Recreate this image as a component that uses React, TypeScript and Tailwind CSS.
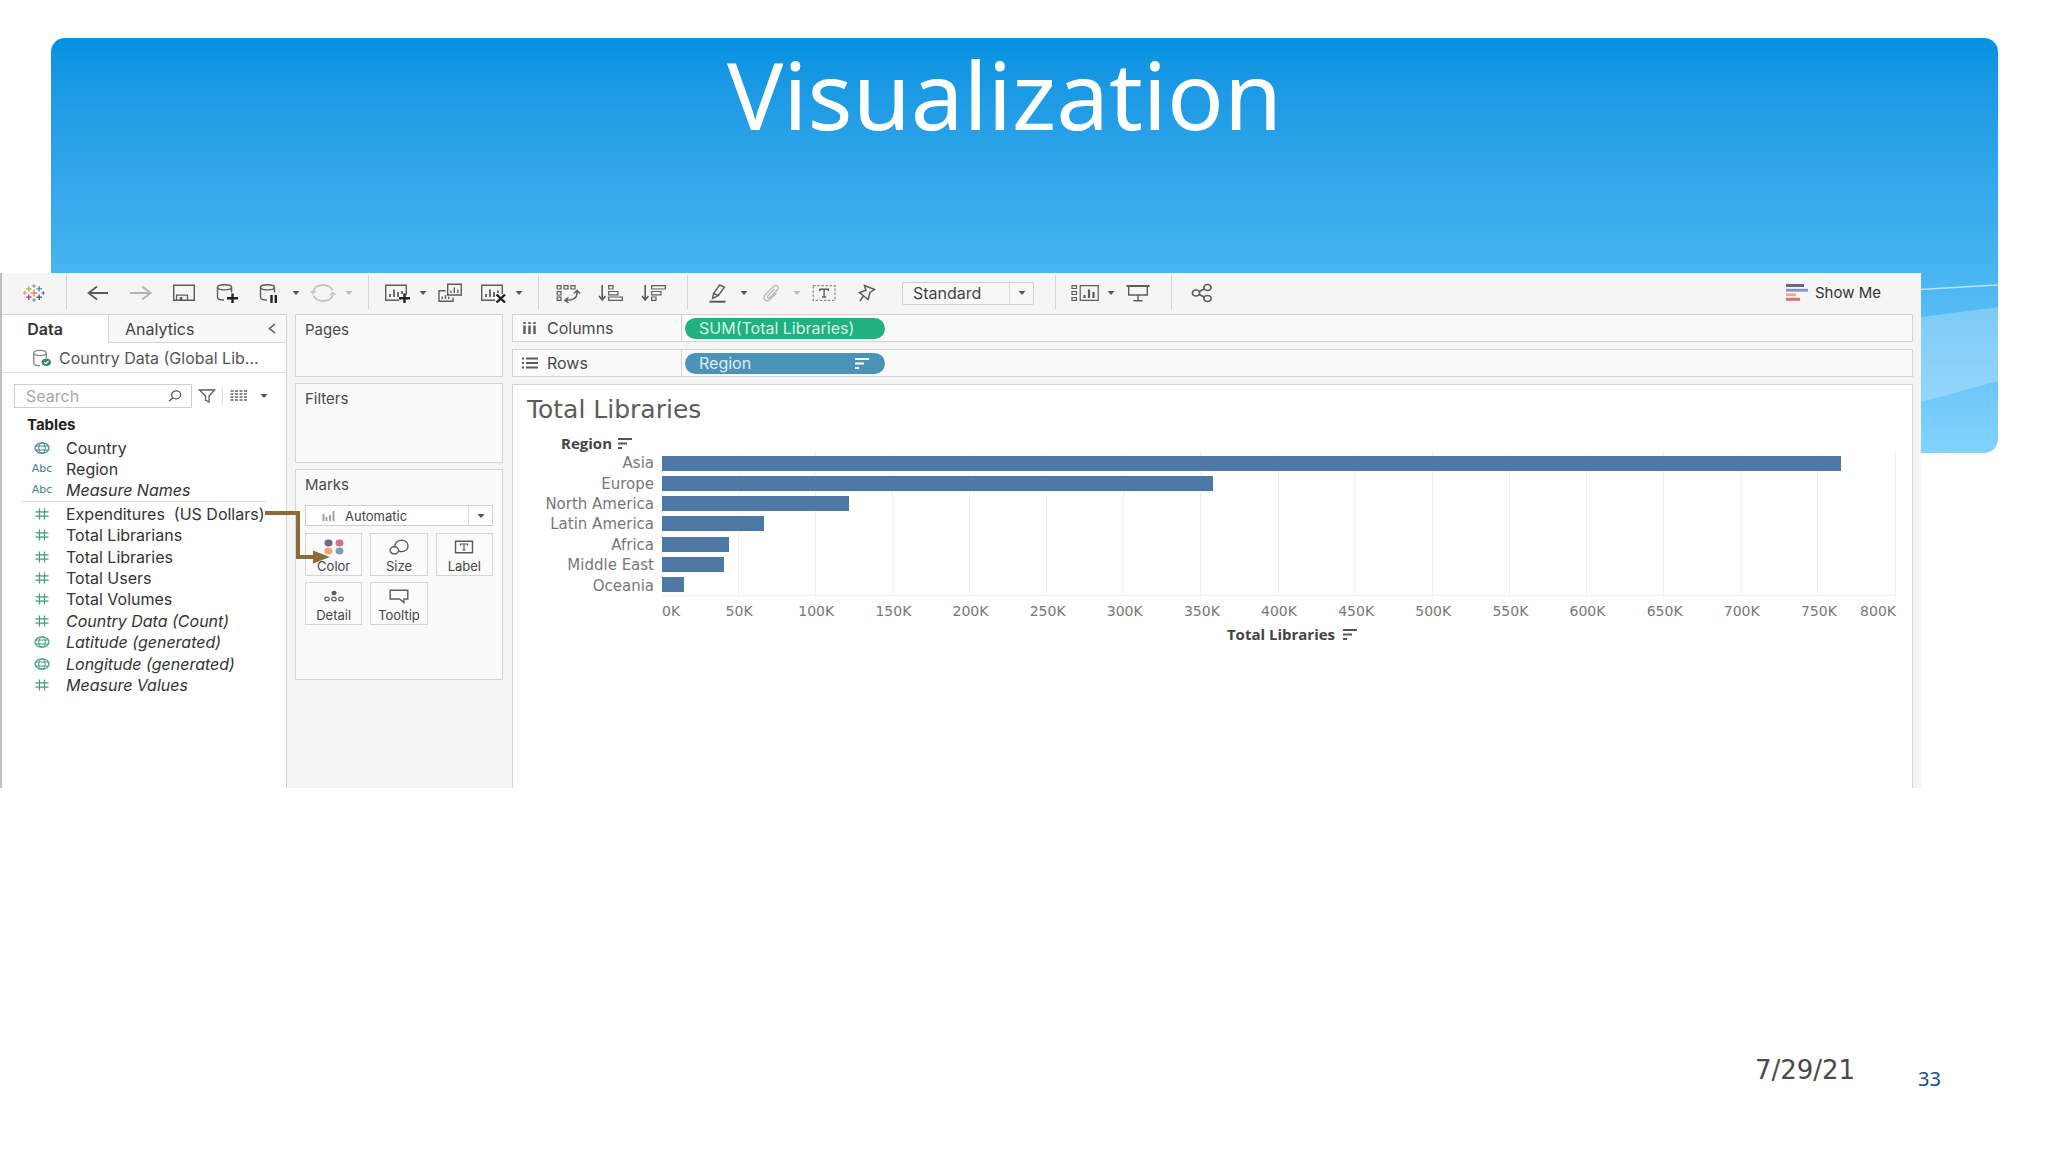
import React from 'react';

const INK = '#5c5c5c';

interface IconProps {
    children: React.ReactNode;
    width?: number;
    height?: number;
    color?: string;
}

function Icon({ children, width = 26, height = 20, color = INK }: IconProps) {
    return (
        <svg
            width={width}
            height={height}
            viewBox={`0 0 ${width} ${height}`}
            fill="none"
            stroke={color}
            strokeWidth="1.4"
            className="shrink-0"
            aria-hidden="true"
        >
            {children}
        </svg>
    );
}

function Caret({ color = '#555' }: { color?: string }) {
    return (
        <svg width="8" height="4" viewBox="0 0 8 4" className="shrink-0" aria-hidden="true">
            <path d="M0.5 0H7.5L4 4Z" fill={color} />
        </svg>
    );
}

function ToolButton({ label, children }: { label: string; children: React.ReactNode }) {
    return (
        <button type="button" aria-label={label} className="flex h-full w-[43px] items-center justify-center">
            {children}
        </button>
    );
}

function CaretButton({ label, color }: { label: string; color?: string }) {
    return (
        <button type="button" aria-label={label} className="flex h-full w-[10px] items-center justify-center">
            <Caret color={color} />
        </button>
    );
}

function ToolGroup({ className, children }: { className: string; children: React.ReactNode }) {
    return <div className={`flex h-[35px] items-center border-[#d6d6d6] ${className}`}>{children}</div>;
}

function SortGlyph({ color = '#555' }: { color?: string }) {
    return (
        <svg width="14" height="11" viewBox="0 0 14 11" className="shrink-0" aria-hidden="true">
            <path d="M0 1H14M0 5.5H9M0 10H4" stroke={color} strokeWidth="1.8" />
        </svg>
    );
}

// [x, y, arm, colour, stroke width]
const logoMarks: [number, number, number, string, number][] = [
    [13, 10, 3.4, '#e0924a', 1.4],
    [7.8, 5.8, 2.8, '#cfa63f', 1.3],
    [18.2, 5.8, 2.8, '#5b879b', 1.3],
    [7.8, 14.2, 2.8, '#b0445c', 1.3],
    [18.2, 14.2, 2.8, '#45596e', 1.3],
    [13, 3, 1.8, '#7199a6', 1.2],
    [13, 17, 1.8, '#7f8f96', 1.2],
    [3.8, 10, 1.8, '#d08f80', 1.2],
    [22.2, 10, 1.8, '#6b6f86', 1.2],
];

function Logo() {
    return (
        <Icon>
            {logoMarks.map(([x, y, r, color, w], index) => (
                <path key={index} d={`M${x - r} ${y}H${x + r}M${x} ${y - r}V${y + r}`} stroke={color} strokeWidth={w} />
            ))}
        </Icon>
    );
}

function Toolbar() {
    return (
        <div className="flex h-[41px] items-center bg-[#f5f5f5] pb-[2px]">
            <div className="flex w-[64px] justify-center">
                <Logo />
            </div>
            <ToolGroup className="border-l pr-[14px] pl-[9px]">
                <ToolButton label="Undo">
                    <Icon>
                        <path d="M23 10H3M12 3.5L3.5 10L12 16.5" strokeWidth="1.8" />
                    </Icon>
                </ToolButton>
                <ToolButton label="Redo">
                    <Icon color="#b3b3b3">
                        <path d="M2 10H23M14 3.5L22.8 10L14 16.5" strokeWidth="1.8" />
                    </Icon>
                </ToolButton>
                <ToolButton label="Save">
                    <Icon>
                        <path d="M2.7 2.2H23.3V17.3H2.7Z" />
                        <path d="M5.5 17V12.2H16.5V17" strokeWidth="1.2" />
                        <path d="M10 17V14" strokeWidth="2.6" />
                    </Icon>
                </ToolButton>
                <ToolButton label="New data source">
                    <Icon>
                        <ellipse cx="10.5" cy="4.3" rx="7" ry="2.6" />
                        <path d="M3.5 4.3V14.2C3.5 15.8 6.5 17 10 17M17.5 4.3V9.5" />
                        <path d="M18.5 10.5V20M13 15.3H24" stroke="#222" strokeWidth="2.4" />
                    </Icon>
                </ToolButton>
                <ToolButton label="Pause updates">
                    <Icon>
                        <ellipse cx="10.5" cy="4.3" rx="7" ry="2.6" />
                        <path d="M3.5 4.3V14.2C3.5 15.8 6.5 17 10 17M17.5 4.3V9.5" />
                        <path d="M14.5 12V20M18.8 12V20" stroke="#222" strokeWidth="2.4" />
                    </Icon>
                </ToolButton>
                <CaretButton label="Update options" />
                <ToolButton label="Run update">
                    <Icon color="#c4c4c4">
                        <path d="M3 9C4 4.5 8 2 13 2C17.5 2 21 4 22.5 7.5M23 11C22 15.5 18 18 13 18C8.5 18 5 16 3.5 12.5" strokeWidth="1.8" />
                        <path d="M0.5 8L3 10.5L6 8M20 12L23 9.5L25.5 12" strokeWidth="1.4" />
                    </Icon>
                </ToolButton>
                <CaretButton label="Run options" color="#b8b8b8" />
            </ToolGroup>
            <ToolGroup className="border-l pr-[14px] pl-[6px]">
                <ToolButton label="New worksheet">
                    <Icon>
                        <path d="M15 17.3H1.7V2.2H22.3V12" />
                        <path d="M6 14V11M10 14V6.5M14 14V9M18 11V8" strokeWidth="1.8" />
                        <path d="M20.5 10.5V20M15 15.3H26" stroke="#222" strokeWidth="2.4" />
                    </Icon>
                </ToolButton>
                <CaretButton label="Worksheet options" />
                <ToolButton label="Duplicate">
                    <Icon>
                        <path d="M10.7 1.2H24.3V12H10.7Z" />
                        <path d="M14 10V7.5M17.3 10V4.5M20.8 10V6.5" strokeWidth="1.4" />
                        <path d="M8.5 7.7H2V18.3H16V14.5" />
                        <path d="M5.3 16V13.5M8.5 16V12M11.7 16V13.8" strokeWidth="1.4" />
                    </Icon>
                </ToolButton>
                <ToolButton label="Clear sheet">
                    <Icon>
                        <path d="M15 17.3H1.7V2.2H22.3V11" />
                        <path d="M6 14V11M10 14V6.5M14 14V9M18 10V7.5" strokeWidth="1.8" />
                        <path d="M16.5 11.5L25 19.5M25 11.5L16.5 19.5" stroke="#222" strokeWidth="2.4" />
                    </Icon>
                </ToolButton>
                <CaretButton label="Clear options" />
            </ToolGroup>
            <ToolGroup className="border-l pr-[12px] pl-[7px]">
                <ToolButton label="Swap rows and columns">
                    <Icon>
                        <path d="M2.2 2.7H6V6H2.2ZM9 2.7H13V6H9ZM16 2.7H20V6H16ZM2.2 8.7H6V12H2.2ZM2.2 14.2H6V17.3H2.2Z" strokeWidth="1.2" />
                        <path d="M22 8V10.5C22 15 17.5 17.3 11 17.3M18.8 10.5L22 7.5L25.2 10.5M13.5 14.5L10 17.3L13.5 20" strokeWidth="1.5" />
                    </Icon>
                </ToolButton>
                <ToolButton label="Sort ascending">
                    <Icon>
                        <path d="M4.2 2V16M1 13L4.2 17L7.4 13" strokeWidth="1.6" />
                        <path d="M10.7 2.7H15V6H10.7ZM10.7 8.5H20V11.8H10.7ZM10.7 14H24.3V17.3H10.7Z" strokeWidth="1.2" />
                    </Icon>
                </ToolButton>
                <ToolButton label="Sort descending">
                    <Icon>
                        <path d="M4.2 2V16M1 13L4.2 17L7.4 13" strokeWidth="1.6" />
                        <path d="M10.7 2.7H24.3V6H10.7ZM10.7 8.5H20V11.8H10.7ZM10.7 14H15V17.3H10.7Z" strokeWidth="1.2" />
                    </Icon>
                </ToolButton>
            </ToolGroup>
            <ToolGroup className="border-l pr-[21px] pl-[8px]">
                <ToolButton label="Highlight">
                    <Icon>
                        <path d="M14.5 2L19.5 4L13.5 12.5L7.5 15.5L8.5 10.5ZM8.5 10.5L13.5 12.5" />
                        <path d="M4.5 18.7H20.5" strokeWidth="2" />
                    </Icon>
                </ToolButton>
                <CaretButton label="Highlight options" />
                <ToolButton label="Group members">
                    <Icon color="#bdbdbd">
                        <path d="M16.5 6L10 12.8C8.6 14.3 10.4 16 12 14.5L19.3 7C22 4 18.2 0.8 15.2 3.8L7.3 11.8C3.6 15.8 8.4 20 12.2 16.3L18.5 10" strokeWidth="1.5" />
                    </Icon>
                </ToolButton>
                <CaretButton label="Group options" color="#b8b8b8" />
                <ToolButton label="Show mark labels">
                    <Icon>
                        <path d="M2.2 2.7H24V17.3H2.2Z" strokeDasharray="2.5 1.6" stroke="#8a8a8a" strokeWidth="1.2" />
                        <path d="M8.8 8V6.2H17.4V8M13.1 6.2V14M11 14H15.2" />
                    </Icon>
                </ToolButton>
                <ToolButton label="Pin">
                    <Icon>
                        <path d="M10.5 2.5L20.5 6.5L16 9.5L14.2 16.5L5.5 9.5L12 7.2ZM9.5 12.8L6 18" strokeWidth="1.5" />
                    </Icon>
                </ToolButton>
                <div className="relative ml-[14px] h-[23px] w-[132px]">
                    <select
                        aria-label="Fit"
                        className="h-full w-full appearance-none rounded-xs border border-[#cfcfcf] bg-[#f8f8f8] pl-[10px] text-[16px] leading-[20px] text-[#444]"
                    >
                        <option>Standard</option>
                    </select>
                    <span className="pointer-events-none absolute inset-y-0 right-0 flex w-[25px] items-center justify-center border-l border-[#dcdcdc]">
                        <Caret />
                    </span>
                </div>
            </ToolGroup>
            <ToolGroup className="border-l pr-[12px] pl-[7px]">
                <ToolButton label="Show cards">
                    <Icon width={28}>
                        <path d="M1 2.7H5.5V5.5H1ZM1 8.5H5.5V11.5H1ZM1 14.5H5.5V17.3H1ZM9.2 2.7H27.2V17.3H9.2Z" strokeWidth="1.2" />
                        <path d="M13.5 15V12M18 15V6.5M22.5 15V9" strokeWidth="2.2" />
                    </Icon>
                </ToolButton>
                <CaretButton label="Card options" />
                <ToolButton label="Presentation mode">
                    <Icon>
                        <path d="M1.5 3H24.5" strokeWidth="2" />
                        <path d="M3.7 3V12H22.3V3M13 12V17.3M8.5 17.8H17.5" />
                    </Icon>
                </ToolButton>
            </ToolGroup>
            <ToolGroup className="border-l pl-[8px]">
                <ToolButton label="Share">
                    <Icon>
                        <ellipse cx="7" cy="10" rx="3.6" ry="3" strokeWidth="1.7" />
                        <ellipse cx="18.5" cy="4.5" rx="3.6" ry="3" strokeWidth="1.7" />
                        <ellipse cx="18.5" cy="15.5" rx="3.6" ry="3" strokeWidth="1.7" />
                        <path d="M10 8.5L15.3 6M10 11.5L15.3 14" strokeWidth="1.7" />
                    </Icon>
                </ToolButton>
            </ToolGroup>
            <button type="button" className="mr-[40px] ml-auto flex items-center gap-[7px] text-[15px] leading-[20px] text-[#333]">
                <svg width="22" height="17" viewBox="0 0 22 17" aria-hidden="true">
                    <path d="M0 1.5H18" stroke="#6a6685" strokeWidth="3" />
                    <path d="M0 6.2H22" stroke="#7f93c4" strokeWidth="2.8" />
                    <path d="M0 10.8H10" stroke="#eeab8c" strokeWidth="2.8" />
                    <path d="M0 15.3H14" stroke="#dc6f73" strokeWidth="3" />
                </svg>
                Show Me
            </button>
        </div>
    );
}

type FieldKind = 'geo' | 'text' | 'number';

interface Field {
    name: string;
    kind: FieldKind;
    italic?: boolean;
    color: string;
}

const BLUE = '#3f8385';
const GREEN = '#3f9c7c';

const dimensions: Field[] = [
    { name: 'Country', kind: 'geo', color: BLUE },
    { name: 'Region', kind: 'text', color: BLUE },
    { name: 'Measure Names', kind: 'text', color: BLUE, italic: true },
];

const measures: Field[] = [
    { name: 'Expenditures  (US Dollars)', kind: 'number', color: GREEN },
    { name: 'Total Librarians', kind: 'number', color: GREEN },
    { name: 'Total Libraries', kind: 'number', color: GREEN },
    { name: 'Total Users', kind: 'number', color: GREEN },
    { name: 'Total Volumes', kind: 'number', color: GREEN },
    { name: 'Country Data (Count)', kind: 'number', color: GREEN, italic: true },
    { name: 'Latitude (generated)', kind: 'geo', color: GREEN, italic: true },
    { name: 'Longitude (generated)', kind: 'geo', color: GREEN, italic: true },
    { name: 'Measure Values', kind: 'number', color: GREEN, italic: true },
];

function FieldIcon({ kind, color }: { kind: FieldKind; color: string }) {
    if (kind === 'text') {
        return <span className="font-['DejaVu_Sans',sans-serif] text-[11px] leading-[14px] text-[#3f8385]">Abc</span>;
    }
    return (
        <Icon width={16} height={12} color={color}>
            {kind === 'geo' ? (
                <>
                    <ellipse cx="8" cy="6" rx="7" ry="5.2" strokeWidth="1.2" />
                    <ellipse cx="8" cy="6" rx="3.2" ry="5.2" strokeWidth="1" />
                    <path d="M1.8 4H14.2M1.8 8H14.2" strokeWidth="1" />
                </>
            ) : (
                <path d="M5.5 0.5V11.5M10.5 0.5V11.5M1.5 3.8H14.5M1.5 8.2H14.5" strokeWidth="1.2" />
            )}
        </Icon>
    );
}

function FieldList({ fields }: { fields: Field[] }) {
    return (
        <>
            {fields.map((field) => (
                <li key={field.name} className="flex flex-1 items-center">
                    <span className="flex w-[42px] justify-center">
                        <FieldIcon kind={field.kind} color={field.color} />
                    </span>
                    <span className={`pl-[3px] whitespace-pre ${field.italic ? 'italic' : ''}`}>{field.name}</span>
                </li>
            ))}
        </>
    );
}

function DataPane() {
    return (
        <aside className="w-[285px] shrink-0 border-t border-r border-[#d4d4d4] bg-white text-[16px] leading-[20px] text-[#333]">
            <div className="flex h-[28px]">
                <button type="button" className="w-[106px] pr-[20px] text-center font-semibold text-[#333]">
                    Data
                </button>
                <div className="flex flex-1 items-center justify-between border-b border-l border-[#d4d4d4] bg-[#f8f8f8] pr-[10px] pl-[16px]">
                    <button type="button" className="text-[#444]">
                        Analytics
                    </button>
                    <button type="button" aria-label="Collapse pane">
                        <svg width="8" height="11" viewBox="0 0 8 11" fill="none" stroke={INK} strokeWidth="1.6" aria-hidden="true">
                            <path d="M7 1L1.5 5.5L7 10" />
                        </svg>
                    </button>
                </div>
            </div>
            <a href="#source" className="flex h-[30px] items-center gap-[7px] border-b border-[#dcdcdc] pl-[30px] text-[#555]">
                <Icon width={20} height={18}>
                    <ellipse cx="8" cy="4" rx="6.3" ry="2.6" stroke="#8a8a8a" />
                    <path d="M1.7 4V14C1.7 15.6 4.5 16.8 8 16.8M14.3 4V9" stroke="#8a8a8a" />
                    <ellipse cx="14.3" cy="13.3" rx="4.7" ry="3.8" fill="#3a8070" stroke="none" />
                    <path d="M12.2 13.2L13.8 14.7L16.6 12" stroke="#fff" strokeWidth="1.2" />
                </Icon>
                Country Data (Global Lib...
            </a>
            <div className="mt-[11px] flex items-center pl-[12px]">
                <div className="flex h-[24px] w-[178px] items-center border border-[#cfcfcf] pr-[9px] pl-[11px]">
                    <input
                        type="text"
                        aria-label="Search"
                        placeholder="Search"
                        className="min-w-0 flex-1 outline-none placeholder:text-[#a8a8a8]"
                    />
                    <Icon width={14} height={12}>
                        <ellipse cx="8.2" cy="4.8" rx="4.6" ry="4" strokeWidth="1.3" />
                        <path d="M5 7.8L1 11.3" strokeWidth="1.5" />
                    </Icon>
                </div>
                <button type="button" aria-label="Filter fields" className="ml-[6px]">
                    <Icon width={18} height={14}>
                        <path d="M1.5 1H16.5L11 7V13L7.5 11V7Z" strokeWidth="1.3" />
                    </Icon>
                </button>
                <button type="button" aria-label="View as" className="ml-[6px] flex h-[18px] items-center gap-[13px] border-l border-[#dcdcdc] pl-[7px]">
                    <Icon width={17} height={12} color="#8a8a8a">
                        <path d="M2 0V12M6.5 0V12M11 0V12M15.5 0V12" strokeWidth="3" strokeDasharray="2 1" />
                    </Icon>
                    <Caret />
                </button>
            </div>
            <h2 className="mt-[7px] pl-[25px] text-[15px] leading-[20px] font-bold text-[#222]">Tables</h2>
            <ul className="mx-[19px] mt-[2px] flex h-[65px] flex-col border-b border-[#dcdcdc]">
                <FieldList fields={dimensions} />
            </ul>
            <ul className="mx-[19px] mt-px flex h-[193px] flex-col">
                <FieldList fields={measures} />
            </ul>
        </aside>
    );
}

function MarkButton({ label, children }: { label: string; children: React.ReactNode }) {
    return (
        <button
            type="button"
            className="flex h-[43px] flex-col items-center justify-between border border-[#d4d4d4] bg-[#fbfbfb] pt-[4px] pb-px text-[13px] leading-[16px] text-[#444]"
        >
            {children}
            {label}
        </button>
    );
}

function Card({ title, className, children }: { title: string; className: string; children?: React.ReactNode }) {
    return (
        <section className={`border border-[#d4d4d4] bg-[#fafafa] px-[9px] pt-[5px] ${className}`}>
            <h2 className="text-[15px] leading-[20px] text-[#4a4a4a]">{title}</h2>
            {children}
        </section>
    );
}

function CardColumn() {
    return (
        <div className="mr-[9px] ml-[8px] flex w-[208px] shrink-0 flex-col gap-[6px]">
            <Card title="Pages" className="h-[63px]" />
            <Card title="Filters" className="h-[80px]" />
            <Card title="Marks" className="h-[211px]">
                <div className="relative mt-[10px] h-[21px]">
                    <select
                        aria-label="Mark type"
                        className="block h-full w-full appearance-none border border-[#cfcfcf] bg-white pl-[39px] text-[13px] leading-[16px] text-[#444]"
                    >
                        <option>Automatic</option>
                    </select>
                    <span className="pointer-events-none absolute inset-y-0 left-[17px] flex items-center">
                        <Icon width={13} height={10} color="#999">
                            <path d="M1.5 3V10M4.5 6V10M8 4V10M11.5 0V10" strokeWidth="1.8" />
                        </Icon>
                    </span>
                    <span className="pointer-events-none absolute inset-y-0 right-0 flex w-[25px] items-center justify-center border-l border-[#dcdcdc]">
                        <Caret />
                    </span>
                </div>
                <div className="mt-[7px] grid grid-cols-3 gap-x-[8px] gap-y-[6px]">
                    <MarkButton label="Color">
                        <Icon width={20} height={18}>
                            <g stroke="none">
                                <ellipse cx="4.5" cy="5" rx="4" ry="3.4" fill="#6f6880" />
                                <ellipse cx="15.5" cy="5" rx="4" ry="3.4" fill="#cf7391" />
                                <ellipse cx="4.5" cy="13" rx="4" ry="3.4" fill="#efa471" />
                                <ellipse cx="15.5" cy="13" rx="4" ry="3.4" fill="#7c9fb9" />
                            </g>
                        </Icon>
                    </MarkButton>
                    <MarkButton label="Size">
                        <Icon width={20} height={18}>
                            <path d="M6 8.5C6 4.5 8.8 2.2 12.5 2.2C16.3 2.2 19 4.6 19 8C19 11.4 16.3 13.6 12.5 13.6C11.3 13.6 10.5 13.4 9.6 13" />
                            <ellipse cx="5.3" cy="12.3" rx="4.2" ry="3.6" />
                        </Icon>
                    </MarkButton>
                    <MarkButton label="Label">
                        <Icon width={20} height={18}>
                            <path d="M1.5 3.2H18.5V14.8H1.5Z" />
                            <path d="M6.5 7.5V6H13.5V7.5M10 6V12M8.3 12H11.7" strokeWidth="1.2" />
                        </Icon>
                    </MarkButton>
                    <MarkButton label="Detail">
                        <Icon width={20} height={18}>
                            <ellipse cx="10" cy="6" rx="2.6" ry="2.2" fill={INK} stroke="none" />
                            <ellipse cx="3" cy="12" rx="2.2" ry="1.9" strokeWidth="1.2" />
                            <ellipse cx="10" cy="12" rx="2.2" ry="1.9" strokeWidth="1.2" />
                            <ellipse cx="17" cy="12" rx="2.2" ry="1.9" strokeWidth="1.2" />
                        </Icon>
                    </MarkButton>
                    <MarkButton label="Tooltip">
                        <Icon width={20} height={18}>
                            <path d="M1.2 3.2H18.8V12H15V15.5L10.5 12H1.2Z" />
                        </Icon>
                    </MarkButton>
                </div>
            </Card>
        </div>
    );
}

function Shelf({ label, icon, children }: { label: string; icon: React.ReactNode; children: React.ReactNode }) {
    return (
        <div className="flex h-[28px] items-center border border-[#d4d4d4] bg-[#fafafa] text-[16px] leading-[20px] text-[#4a4a4a]">
            <div className="flex h-full w-[169px] items-center gap-[9px] border-r border-[#d4d4d4] pl-[9px]">
                {icon}
                {label}
            </div>
            {children}
        </div>
    );
}

const regions = [
    { name: 'Asia', total: 764.4 },
    { name: 'Europe', total: 357 },
    { name: 'North America', total: 121.3 },
    { name: 'Latin America', total: 66 },
    { name: 'Africa', total: 43.2 },
    { name: 'Middle East', total: 40.4 },
    { name: 'Oceania', total: 14 },
];

const AXIS_MAX = 800;
const ticks = Array.from({ length: 15 }, (_, i) => (i + 1) * 50);

function Chart() {
    return (
        <figure className="font-['DejaVu_Sans','Verdana',sans-serif] text-[15px] leading-[18px] text-[#777]">
            <div className="mb-px flex w-[149px] items-center justify-end gap-[6px] pr-[30px] font-['Open_Sans',sans-serif] font-bold text-[#444]">
                Region
                <SortGlyph />
            </div>
            <div className="flex h-[143px]">
                <ul className="flex w-[149px] shrink-0 flex-col pr-[8px] text-right">
                    {regions.map((region) => (
                        <li key={region.name} className="flex flex-1 items-center justify-end">
                            {region.name}
                        </li>
                    ))}
                </ul>
                <div className="grid flex-1 border-b border-[#f0f0f0]">
                    <div className="col-start-1 row-start-1 grid grid-cols-16 divide-x divide-[#f0f0f0] border-r border-[#f0f0f0]">
                        {Array.from({ length: 16 }, (_, i) => (
                            <div key={i} />
                        ))}
                    </div>
                    <div className="col-start-1 row-start-1 flex flex-col">
                        {regions.map((region) => (
                            <div key={region.name} className="flex flex-1 items-center">
                                <div className="h-[15px] bg-[#4e79a7]" style={{ width: `${(region.total / AXIS_MAX) * 100}%` }} />
                            </div>
                        ))}
                    </div>
                </div>
            </div>
            <div className="mt-[6px] ml-[149px] flex text-center text-[14px] leading-[18px]">
                <span className="min-w-0 flex-1 text-left">0K</span>
                {ticks.map((tick) => (
                    <span key={tick} className="min-w-0 flex-2">
                        {tick}K
                    </span>
                ))}
                <span className="flex min-w-0 flex-1 justify-end">800K</span>
            </div>
            <figcaption className="mt-[5px] ml-[149px] flex items-center justify-center gap-[8px] pl-[26px] font-['Open_Sans',sans-serif] font-bold text-[#444]">
                Total Libraries
                <SortGlyph />
            </figcaption>
        </figure>
    );
}

function Worksheet() {
    return (
        <main className="mr-[8px] flex min-w-0 flex-1 flex-col gap-[7px]">
            <Shelf
                label="Columns"
                icon={
                    <svg width="16" height="12" viewBox="0 0 16 12" aria-hidden="true">
                        <path d="M2.5 0V2M7.5 0V2M12.5 0V2M2.5 3.5V12M7.5 3.5V12M12.5 3.5V12" stroke={INK} strokeWidth="2.4" />
                    </svg>
                }
            >
                <button type="button" className="ml-[3px] h-[21px] w-[200px] rounded-full bg-[#21b07f] pl-[14px] text-left text-[#d5f3e6]">
                    SUM(Total Libraries)
                </button>
            </Shelf>
            <Shelf
                label="Rows"
                icon={
                    <svg width="16" height="12" viewBox="0 0 16 12" aria-hidden="true">
                        <path d="M0 1.5H2M0 6H2M0 10.5H2M4 1.5H16M4 6H16M4 10.5H16" stroke={INK} strokeWidth="2" />
                    </svg>
                }
            >
                <button
                    type="button"
                    className="ml-[3px] flex h-[21px] w-[200px] items-center justify-between rounded-full bg-[#4b93b6] pr-[16px] pl-[14px] text-[#dcedf5]"
                >
                    Region
                    <SortGlyph color="#fff" />
                </button>
            </Shelf>
            <section className="flex-1 border-x border-t border-[#d4d4d4] bg-white pr-[16px]">
                <h2 className="mt-[9px] mb-[8px] pl-[14px] font-['DejaVu_Sans','Verdana',sans-serif] text-[25px] leading-[32px] text-[#5c5c5c]">
                    Total Libraries
                </h2>
                <Chart />
            </section>
        </main>
    );
}

function App() {
    return (
        <div className="flex min-h-screen flex-col overflow-hidden bg-white font-['Inter','Liberation_Sans',sans-serif]">
            <header className="relative mt-[38px] mr-[50px] ml-[51px] h-[415px] rounded-[14px] bg-linear-to-b from-[#0292e1] via-[#45b4f0] via-55% to-[#82d2ff]">
                <svg
                    className="absolute right-0 bottom-0 rounded-br-[14px]"
                    width="400"
                    height="180"
                    viewBox="0 0 400 180"
                    fill="none"
                    aria-hidden="true"
                >
                    <path d="M0 95Q210 58 400 34V108L323 129Q250 150 150 180H0Z" fill="#fff" fillOpacity="0.24" />
                    <path d="M0 40Q250 20 400 12" stroke="#fff" strokeOpacity="0.6" strokeWidth="1.4" />
                </svg>
                <h1 className="relative pr-[40px] text-center font-['Noto_Sans',sans-serif] text-[94px] leading-[112px] text-white">
                    Visualization
                </h1>
            </header>
            <div className="relative -mt-[180px] mr-[127px] border-l-2 border-[#c0c0c0] bg-[#f4f4f4]">
                <Toolbar />
                <div className="flex min-h-[474px]">
                    <DataPane />
                    <CardColumn />
                    <Worksheet />
                </div>
                {/* drag path from the measure to the Color mark */}
                <svg className="pointer-events-none absolute top-[236px] left-[263px]" width="66" height="56" viewBox="0 0 66 56" fill="none" aria-hidden="true">
                    <path d="M0 4H33V48H50" stroke="#8b6b38" strokeWidth="4" />
                    <path d="M48 41.5L65 48L48 54.5Z" fill="#8b6b38" />
                </svg>
            </div>
            <footer className="mt-auto mr-[107px] mb-[58px] flex items-end justify-end gap-[63px]">
                <time className="mb-[9px] font-['DejaVu_Sans','Verdana',sans-serif] text-[26px] leading-[30px] text-[#4a4a4a]">7/29/21</time>
                <span className="font-['Noto_Sans',sans-serif] text-[20px] leading-[30px] text-[#134a94]">33</span>
            </footer>
        </div>
    );
}

export default App;
